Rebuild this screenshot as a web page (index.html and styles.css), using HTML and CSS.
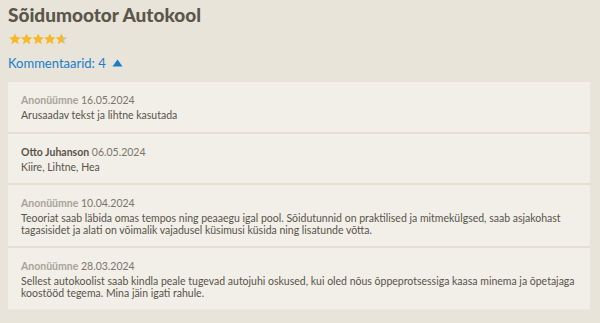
FILE: index.html
```html
<!DOCTYPE html>
<html lang="et">
<head>
  <meta charset="UTF-8" />
  <title>Sõidumootor Autokool</title>
  <link rel="stylesheet" href="styles.css">
</head>
<body>
  <div class="container">
    <h2 class="title">Sõidumootor Autokool</h2>

    <div class="stars">
      <svg width="60" height="12" viewBox="0 0 60 12">
        <defs>
          <linearGradient id="half">
            <stop offset="65%" stop-color="#f7b928"/>
            <stop offset="65%" stop-color="#c9c4b8"/>
          </linearGradient>
          <path id="star" d="M6 0.4l1.7 3.7 4 .4-3 2.7.9 4-3.6-2.1-3.6 2.1.9-4-3-2.7 4-.4z"/>
        </defs>
        <use href="#star" x="0" fill="#f7b928"/>
        <use href="#star" x="11.6" fill="#f7b928"/>
        <use href="#star" x="23.2" fill="#f7b928"/>
        <use href="#star" x="34.8" fill="#f7b928"/>
        <use href="#star" x="46.4" fill="url(#half)"/>
      </svg>
    </div>

    <a class="toggle" href="#">Kommentaarid: 4
      <svg width="11" height="8" viewBox="0 0 11 8"><path d="M5.5 0.5L10.5 7.5H0.5z" fill="#1a7dc9"/></svg>
    </a>

    <div class="comments">
      <div class="comment">
        <div class="meta"><span class="anon">Anonüümne</span> 16.05.2024</div>
        <p>Arusaadav tekst ja lihtne kasutada</p>
      </div>
      <div class="comment">
        <div class="meta"><span class="name">Otto Juhanson</span> 06.05.2024</div>
        <p>Kiire, Lihtne, Hea</p>
      </div>
      <div class="comment">
        <div class="meta"><span class="anon">Anonüümne</span> 10.04.2024</div>
        <p>Teooriat saab läbida omas tempos ning peaaegu igal pool. Sõidutunnid on praktilised ja mitmekülgsed, saab asjakohast tagasisidet ja alati on võimalik vajadusel küsimusi küsida ning lisatunde võtta.</p>
      </div>
      <div class="comment">
        <div class="meta"><span class="anon">Anonüümne</span> 28.03.2024</div>
        <p>Sellest autokoolist saab kindla peale tugevad autojuhi oskused, kui oled nõus õppeprotsessiga kaasa minema ja õpetajaga koostööd tegema. Mina jäin igati rahule.</p>
      </div>
    </div>
  </div>
</body>
</html>
```

FILE: styles.css
```css
body {
  margin: 0;
  background-color: #e8e4d9;
  font-family: Lato, "Open Sans", sans-serif;
  color: #58534a;
}
.container {
  padding: 3px 10px 12px 8px;
}
.title {
  margin: 0;
  font-size: 19px;
  line-height: 24px;
  font-weight: 900;
  color: #5b564b;
}
.stars {
  margin-top: 6px;
  height: 12px;
  padding-left: 1px;
}
.stars svg {
  display: block;
}
.toggle {
  display: inline-flex;
  align-items: center;
  gap: 6px;
  margin-top: 10px;
  font-size: 13px;
  line-height: 16px;
  color: #1a7dc9;
  text-decoration: none;
}
.comments {
  margin-top: 11px;
}
.comment {
  background: #f2efe8;
  padding: 12px 13px 10px;
  border-bottom: 2px solid #e4dfd2;
}
.comment:last-child {
  border-bottom: 1px solid #ebe7dd;
}
.meta {
  font-size: 10.5px;
  line-height: 12px;
  color: #7b766b;
}
.anon {
  color: #a8a398;
  font-weight: 700;
}
.name {
  color: #58534a;
  font-weight: 700;
}
.comment p {
  margin: 4px 0 0;
  font-size: 10.5px;
  line-height: 11.5px;
  color: #58534a;
}
```
